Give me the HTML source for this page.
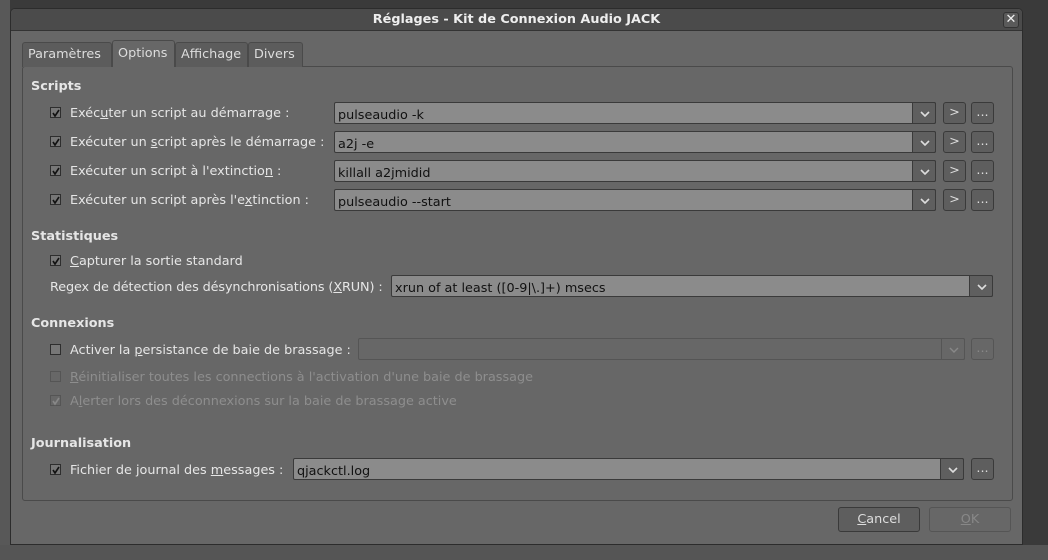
<!DOCTYPE html>
<html><head><meta charset="utf-8"><style>
*{box-sizing:border-box;margin:0;padding:0}
body{width:1048px;height:560px;background:#3a3a3a;position:relative;overflow:hidden;font-family:"DejaVu Sans","Liberation Sans",sans-serif;font-size:12.8px;color:#e6e6e6}
.a{position:absolute;white-space:nowrap}
.t{margin-top:2px}
.dlg{left:10px;top:8px;width:1013px;height:537px;background:#676767;border:1px solid #2c2c2c;border-radius:5px 5px 0 0}
.title{left:11px;top:9px;width:1011px;height:22px;background:#4b4b4b;border-bottom:1px solid #333;border-radius:4px 4px 0 0;text-align:center;font-weight:bold;line-height:22px;color:#eee}
.panel{left:22px;top:66px;width:991px;height:435px;border:1px solid #4a4a4a;border-radius:3px;background:#676767}
.tab{top:42px;height:25px;border:1px solid #4a4a4a;border-bottom:none;border-radius:3px 3px 0 0;background:#5c5c5c;line-height:24px;padding-left:5px;color:#ddd}
.h{font-weight:bold;color:#e6e6e6}
.cb{width:11px;height:11px;border:1px solid #2e2e2e;background:#777}
.cb svg{position:absolute;left:0;top:0}
.cmb{height:22px;border:1px solid #3a3a3a;border-radius:2px;background:#8b8b8b;color:#111;line-height:21px;padding-left:3px}
.dd{top:-1px;right:-1px;width:24px;height:22px;background:#5f5f5f;border:1px solid #3a3a3a;border-radius:0 2px 2px 0}
.dd svg{position:absolute;left:7px;top:8px}
.btn{width:23px;height:22px;border:1px solid #3a3a3a;border-radius:3px;background:#5e5e5e;color:#ddd;text-align:center;line-height:19px}
.dis{color:#8e8e8e}
u{text-decoration:underline}
</style></head><body>
<div class="a" style="left:0;top:0;width:10px;height:560px;background:#585858"></div>
<div class="a" style="left:0;top:545px;width:1048px;height:15px;background:#555"></div>
<div class="a dlg"></div>
<div class="a title">Réglages - Kit de Connexion Audio JACK</div>
<div class="a" style="left:1003px;top:12px;width:16px;height:16px;border:1px solid #333;border-radius:3px;background:#5a5a5a;color:#eee;font-weight:bold;text-align:center;line-height:14px;font-size:13px">✕</div>
<div class="a panel"></div>
<div class="a tab" style="left:22px;width:90px">Paramètres</div>
<div class="a tab" style="left:112px;top:40px;height:27px;width:63px;background:#676767;line-height:26px">Options</div>
<div class="a tab" style="left:175px;width:73px">Affichage</div>
<div class="a tab" style="left:248px;width:55px">Divers</div>

<div class="a h t" style="left:31px;top:77px">Scripts</div>

<div class="a cb" style="left:50px;top:107px"><svg width="11" height="11"><path d="M2 5l2 3 4-6" stroke="#111" stroke-width="1.6" fill="none"/></svg></div><div class="a t" style="left:70px;top:104px">Exéc<u>u</u>ter un script au démarrage :</div>
<div class="a cmb" style="left:334px;top:102px;width:602px"><span class="t" style="display:inline-block">pulseaudio -k</span><div class="a dd"><svg width="10" height="6"><path d="M1 1l4 4 4-4" stroke="#ddd" stroke-width="1.6" fill="none"/></svg></div></div>
<div class="a btn" style="left:943px;top:102px">&gt;</div><div class="a btn" style="left:971px;top:102px">...</div>

<div class="a cb" style="left:50px;top:136px"><svg width="11" height="11"><path d="M2 5l2 3 4-6" stroke="#111" stroke-width="1.6" fill="none"/></svg></div><div class="a t" style="left:70px;top:133px">Exécuter un <u>s</u>cript après le démarrage :</div>
<div class="a cmb" style="left:334px;top:131px;width:602px"><span class="t" style="display:inline-block">a2j -e</span><div class="a dd"><svg width="10" height="6"><path d="M1 1l4 4 4-4" stroke="#ddd" stroke-width="1.6" fill="none"/></svg></div></div>
<div class="a btn" style="left:943px;top:131px">&gt;</div><div class="a btn" style="left:971px;top:131px">...</div>

<div class="a cb" style="left:50px;top:165px"><svg width="11" height="11"><path d="M2 5l2 3 4-6" stroke="#111" stroke-width="1.6" fill="none"/></svg></div><div class="a t" style="left:70px;top:162px">Exécuter un script à l'extinctio<u>n</u> :</div>
<div class="a cmb" style="left:334px;top:160px;width:602px"><span class="t" style="display:inline-block">killall a2jmidid</span><div class="a dd"><svg width="10" height="6"><path d="M1 1l4 4 4-4" stroke="#ddd" stroke-width="1.6" fill="none"/></svg></div></div>
<div class="a btn" style="left:943px;top:160px">&gt;</div><div class="a btn" style="left:971px;top:160px">...</div>

<div class="a cb" style="left:50px;top:194px"><svg width="11" height="11"><path d="M2 5l2 3 4-6" stroke="#111" stroke-width="1.6" fill="none"/></svg></div><div class="a t" style="left:70px;top:191px">Exécuter un script après l'e<u>x</u>tinction :</div>
<div class="a cmb" style="left:334px;top:189px;width:602px"><span class="t" style="display:inline-block">pulseaudio --start</span><div class="a dd"><svg width="10" height="6"><path d="M1 1l4 4 4-4" stroke="#ddd" stroke-width="1.6" fill="none"/></svg></div></div>
<div class="a btn" style="left:943px;top:189px">&gt;</div><div class="a btn" style="left:971px;top:189px">...</div>

<div class="a h t" style="left:31px;top:227px">Statistiques</div>
<div class="a cb" style="left:50px;top:255px"><svg width="11" height="11"><path d="M2 5l2 3 4-6" stroke="#111" stroke-width="1.6" fill="none"/></svg></div><div class="a t" style="left:70px;top:252px"><u>C</u>apturer la sortie standard</div>
<div class="a t" style="left:50px;top:278px;letter-spacing:-0.1px">Regex de détection des désynchronisations (<u>X</u>RUN) :</div>
<div class="a cmb" style="left:391px;top:275px;width:602px"><span class="t" style="display:inline-block">xrun of at least ([0-9|\.]+) msecs</span><div class="a dd"><svg width="10" height="6"><path d="M1 1l4 4 4-4" stroke="#ddd" stroke-width="1.6" fill="none"/></svg></div></div>

<div class="a h t" style="left:31px;top:314px">Connexions</div>
<div class="a cb" style="left:50px;top:344px"></div><div class="a t" style="left:70px;top:341px">Activer la <u>p</u>ersistance de baie de brassage :</div>
<div class="a cmb" style="left:358px;top:338px;width:607px;background:#676767;border-color:#555"><div class="a dd" style="background:#676767;border-color:#555"><svg width="10" height="6"><path d="M1 1l4 4 4-4" stroke="#888" stroke-width="1.4" fill="none"/></svg></div></div>
<div class="a btn" style="left:971px;top:338px;background:#676767;border-color:#555;color:#888">...</div>
<div class="a cb" style="left:50px;top:371px;background:#676767;border-color:#555"></div><div class="a dis t" style="left:70px;top:368px"><u>R</u>éinitialiser toutes les connections à l'activation d'une baie de brassage</div>
<div class="a cb" style="left:50px;top:395px;background:#676767;border-color:#555"><svg width="11" height="11"><path d="M2 5l2 3 4-6" stroke="#888" stroke-width="1.6" fill="none"/></svg></div><div class="a dis t" style="left:70px;top:392px">A<u>l</u>erter lors des déconnexions sur la baie de brassage active</div>

<div class="a h t" style="left:31px;top:434px">Journalisation</div>
<div class="a cb" style="left:50px;top:464px"><svg width="11" height="11"><path d="M2 5l2 3 4-6" stroke="#111" stroke-width="1.6" fill="none"/></svg></div><div class="a t" style="left:70px;top:461px">Fichier de journal des <u>m</u>essages :</div>
<div class="a cmb" style="left:293px;top:458px;width:671px"><span class="t" style="display:inline-block">qjackctl.log</span><div class="a dd"><svg width="10" height="6"><path d="M1 1l4 4 4-4" stroke="#ddd" stroke-width="1.6" fill="none"/></svg></div></div>
<div class="a btn" style="left:971px;top:458px">...</div>

<div class="a btn" style="left:838px;top:507px;width:82px;height:25px;line-height:24px"><u>C</u>ancel</div>
<div class="a btn" style="left:929px;top:507px;width:82px;height:25px;line-height:24px;background:#676767;border-color:#555;color:#888"><u>O</u>K</div>
</body></html>
